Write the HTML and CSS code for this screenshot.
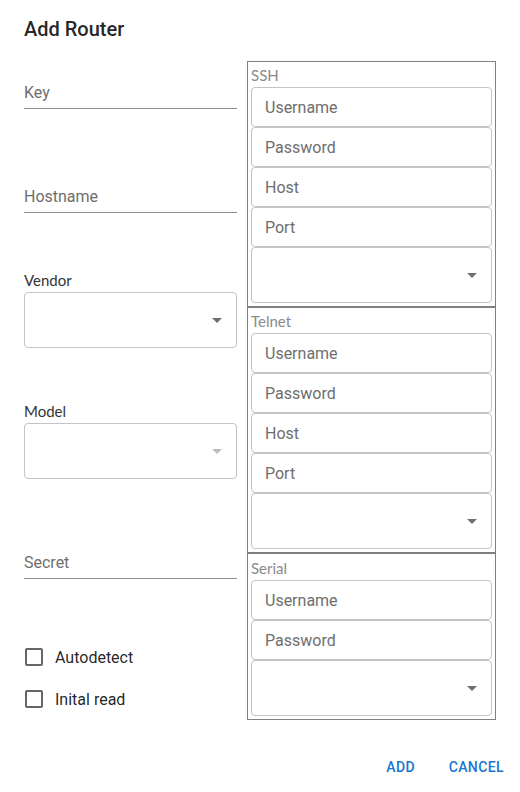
FILE: index.html
```html
<!DOCTYPE html>
<html>
    <head>
        <meta name="viewport" content="width=device-width, initial-scale=1">
        <meta charset="UTF-8">
        <title>Add Router</title>
        <link rel="stylesheet" href="styles.css">
    </head>
    <body>
        <div class="dialog">
            <h2 class="dialog-title">Add Router</h2>

            <div class="dialog-content">
                <div class="router-col">
                    <div class="text-field"><input type="text" placeholder="Key"></div>
                    <div class="text-field gap-56"><input type="text" placeholder="Hostname"></div>

                    <div class="select-field gap-58">
                        <label class="select-label">Vendor</label>
                        <div class="select-box">
                            <svg class="select-arrow" viewBox="0 0 24 24"><path d="M7 10l5 5 5-5z"/></svg>
                        </div>
                    </div>

                    <div class="select-field gap-54">
                        <label class="select-label">Model</label>
                        <div class="select-box disabled">
                            <svg class="select-arrow" viewBox="0 0 24 24"><path d="M7 10l5 5 5-5z"/></svg>
                        </div>
                    </div>

                    <div class="text-field gap-52"><input type="text" placeholder="Secret"></div>

                    <label class="check-row gap-57">
                        <svg class="check-icon" viewBox="0 0 24 24"><path d="M19 5v14H5V5h14m0-2H5c-1.11 0-2 .9-2 2v14c0 1.1.89 2 2 2h14c1.1 0 2-.9 2-2V5c0-1.1-.9-2-2-2z"/></svg>
                        <span>Autodetect</span>
                    </label>
                    <label class="check-row">
                        <svg class="check-icon" viewBox="0 0 24 24"><path d="M19 5v14H5V5h14m0-2H5c-1.11 0-2 .9-2 2v14c0 1.1.89 2 2 2h14c1.1 0 2-.9 2-2V5c0-1.1-.9-2-2-2z"/></svg>
                        <span>Inital read</span>
                    </label>
                </div>

                <div class="conn-col">
                    <div class="conn-group">
                        <div class="conn-title">SSH</div>
                        <input class="conn-input" type="text" placeholder="Username">
                        <input class="conn-input" type="text" placeholder="Password">
                        <input class="conn-input" type="text" placeholder="Host">
                        <input class="conn-input" type="text" placeholder="Port">
                        <div class="select-box">
                            <svg class="select-arrow" viewBox="0 0 24 24"><path d="M7 10l5 5 5-5z"/></svg>
                        </div>
                    </div>
                    <div class="conn-group">
                        <div class="conn-title">Telnet</div>
                        <input class="conn-input" type="text" placeholder="Username">
                        <input class="conn-input" type="text" placeholder="Password">
                        <input class="conn-input" type="text" placeholder="Host">
                        <input class="conn-input" type="text" placeholder="Port">
                        <div class="select-box">
                            <svg class="select-arrow" viewBox="0 0 24 24"><path d="M7 10l5 5 5-5z"/></svg>
                        </div>
                    </div>
                    <div class="conn-group">
                        <div class="conn-title">Serial</div>
                        <input class="conn-input" type="text" placeholder="Username">
                        <input class="conn-input" type="text" placeholder="Password">
                        <div class="select-box">
                            <svg class="select-arrow" viewBox="0 0 24 24"><path d="M7 10l5 5 5-5z"/></svg>
                        </div>
                    </div>
                </div>
            </div>

            <div class="dialog-actions">
                <button class="text-button">Add</button>
                <button class="text-button">Cancel</button>
            </div>
        </div>
    </body>
</html>
```

FILE: styles.css
```css
* {
    box-sizing: border-box;
}

html, body {
    margin: 0;
    background-color: white;

    font-family: Roboto, "Liberation Sans", sans-serif;
    color: rgba(0, 0, 0, 0.87);
}

.dialog {
    width: 520px;
}

.dialog-title {
    margin: 0;
    padding: 13px 24px 0;

    font-size: 20px;
    font-weight: 500;
    line-height: 32px;
}

.dialog-content {
    display: flex;
    gap: 10px;
    padding: 16px 24px 21px;
}

.router-col {
    width: 213px;
    display: flex;
    flex-direction: column;
}

.conn-col {
    flex: 1;
    display: flex;
    flex-direction: column;
}

.gap-52 { margin-top: 52px; }
.gap-54 { margin-top: 54px; }
.gap-56 { margin-top: 56px; }
.gap-57 { margin-top: 57px; }
.gap-58 { margin-top: 58px; }

/* underlined text inputs */
.text-field {
    padding-top: 19px;
    border-bottom: 1px solid #8f8f8f;
}

.text-field input {
    display: block;
    width: 100%;
    height: 28px;
    padding: 0 0 4px;

    border: 0;
    outline: none;
    background: transparent;

    font-family: inherit;
    font-size: 16px;
    color: inherit;
}

input::placeholder {
    color: #6e6e6e;
    opacity: 1;
}

.select-label {
    display: block;
    margin-bottom: 3px;

    font-family: Lato, "Noto Sans", sans-serif;
    font-size: 15px;
    line-height: 18px;
    color: #333;
}

.select-box {
    position: relative;
    height: 56px;
    border: 1px solid #c4c4c4;
    border-radius: 4px;
}

.select-arrow {
    position: absolute;
    right: 7px;
    top: 15px;
    width: 24px;
    height: 24px;
    fill: #6f6f6f;
}

.select-box.disabled .select-arrow {
    fill: #bdbdbd;
}

/* checkboxes */
.check-row {
    display: flex;
    align-items: center;
    height: 42px;
    margin-left: -11px;

    font-size: 16px;
}

.check-icon {
    width: 24px;
    height: 24px;
    margin: 0 9px;
    fill: #666;
}

/* connection groups */
.conn-group {
    display: flex;
    flex-direction: column;
    padding: 0 3px 3px;
    border: 1px solid #808080;
}

.conn-group:last-child {
    padding-top: 1px;
}

.conn-title {
    padding: 4px 0 0 0;
    margin-bottom: 3px;

    font-family: Lato, "Noto Sans", sans-serif;
    font-size: 15px;
    line-height: 18px;
    color: #8a8a8a;
}

.conn-input {
    display: block;
    width: 100%;
    height: 40px;
    padding: 0 13px;

    border: 1px solid #c4c4c4;
    border-radius: 4px;
    outline: none;

    font-family: inherit;
    font-size: 16px;
    color: inherit;
}

/* actions */
.dialog-actions {
    display: flex;
    justify-content: flex-end;
    gap: 8px;
    padding: 8px;
}

.text-button {
    min-width: 64px;
    padding: 6px 8px;

    border: 0;
    border-radius: 4px;
    background: transparent;

    font-family: inherit;
    font-size: 14px;
    font-weight: 500;
    line-height: 24.5px;
    letter-spacing: 0.4px;
    text-transform: uppercase;
    color: #1976d2;
}
```
